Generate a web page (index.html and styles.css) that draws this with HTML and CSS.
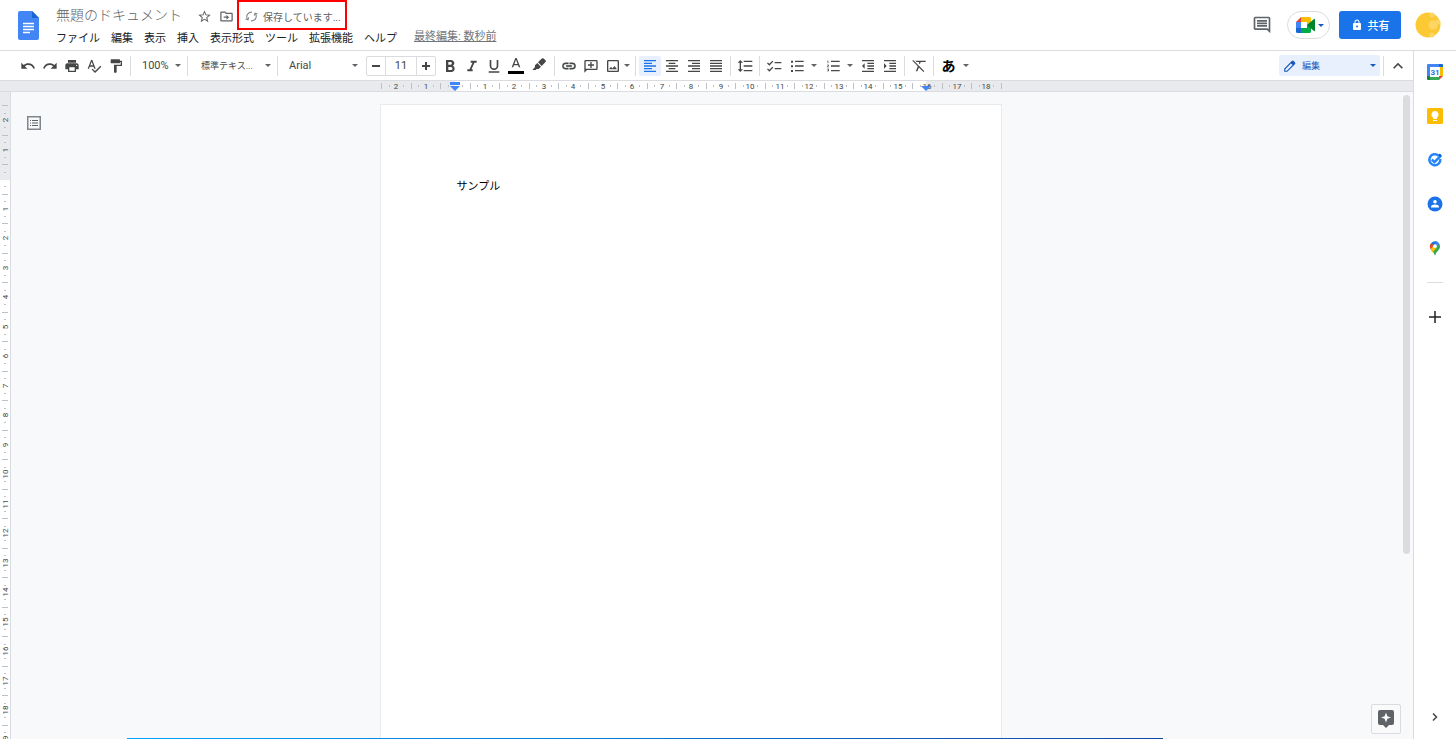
FILE: index.html
```html
<!DOCTYPE html>
<html lang="ja">
<head>
<meta charset="utf-8">
<meta name="viewport" content="width=device-width, initial-scale=1">
<title>無題のドキュメント</title>
<link rel="stylesheet" href="styles.css">
</head>
<body>
<div class="app">
  <header class="header">
    <a class="logo" href="#" aria-label="ドキュメント ホーム">
      <svg viewBox="0 0 22 30" width="22" height="30"><path fill="#4285f4" d="M2 0h12l7 7v20a2 2 0 0 1-2 2H2a2 2 0 0 1-2-2V2a2 2 0 0 1 2-2z"/><path fill="#1967d2" d="M14 0l7 7h-7z"/><path stroke="#fff" stroke-width="1.5" d="M5 12.5h11M5 15.5h11M5 18.500h11M5 21.500h7"/></svg>
    </a>
    <div class="heading">
      <div class="title-row">
        <h1 class="title">無題のドキュメント</h1>
        <button class="mini" aria-label="スター"><svg viewBox="0 0 24 24" width="15" height="15"><path d="M22 9.240l-7.190-.62L12 2 9.190 8.630 2 9.240l5.460 4.730L5.820 21 12 17.270 18.180 21l-1.630-7.030L22 9.240zM12 15.400l-3.760 2.270 1-4.280-3.320-2.880 4.380-.38L12 6.100l1.710 4.040 4.380.38-3.320 2.880 1 4.280L12 15.400z"/></svg></button>
        <button class="mini" aria-label="移動"><svg viewBox="0 0 24 24" width="15" height="15"><path d="M20 6h-8l-2-2H4c-1.100 0-2 .9-2 2v12c0 1.100.9 2 2 2h16c1.100 0 2-.9 2-2V8c0-1.100-.9-2-2-2zm0 12H4V6h5.200l2 2H20v10zm-8-1l4-4-4-4v3H7.500v2H12z"/></svg></button>
        <div class="saving" role="status">
          <svg viewBox="0 0 24 24" width="13" height="13" fill="none" stroke="#80868b" stroke-width="2"><path d="M5 17.500A8.500 8.500 0 0 1 13 4M19 6.500A8.500 8.500 0 0 1 11 20"/><path d="M1 16.500l4.500 1.500L7 13.500M23 7.500L18.500 6 17 10.500"/></svg>
          <span>保存しています...</span>
        </div>
      </div>
      <nav class="menus">
        <button>ファイル</button><button>編集</button><button>表示</button><button>挿入</button><button>表示形式</button><button>ツール</button><button>拡張機能</button><button>ヘルプ</button>
        <a class="last-edit" href="#">最終編集: 数秒前</a>
      </nav>
    </div>
    <div class="actions">
      <button class="comments" aria-label="コメント"><svg viewBox="0 0 24 24" width="20" height="20"><path d="M21.990 4c0-1.100-.89-2-1.990-2H4c-1.100 0-2 .9-2 2v12c0 1.100.9 2 2 2h14l4 4-.01-18zM20 4v13.170L18.830 16H4V4h16zM6 12h12v2H6zm0-3h12v2H6zm0-3h12v2H6z"/></svg></button>
      <button class="meet" aria-label="Meet">
        <svg viewBox="0 0 20 16" width="20" height="16"><path fill="#ea4335" d="M0 5l5-5v5z"/><path fill="#4285f4" d="M0 5h5v6H0z"/><path fill="#1967d2" d="M0 11h5v5H1.500A1.500 1.500 0 0 1 0 14.500z"/><path fill="#fbbc04" d="M5 0h8.500A1.500 1.500 0 0 1 15 1.500V5l-4 3V5H5z"/><path fill="#00ac47" d="M5 11h6V8l4-3v9.500a1.500 1.500 0 0 1-1.500 1.500H5z"/><path fill="#00832d" d="M11 8l7-6q1-.6 1 .6v10.800q0 1.200-1 .6z"/></svg>
        <span class="caret caret-blue"></span>
      </button>
      <button class="share"><svg viewBox="0 0 24 24" width="12" height="12"><path fill="#fff" d="M18 8h-1V6c0-2.760-2.240-5-5-5S7 3.240 7 6v2H6c-1.100 0-2 .9-2 2v10c0 1.100.9 2 2 2h12c1.100 0 2-.9 2-2V10c0-1.100-.9-2-2-2zm-6 9a2 2 0 1 1 0-4 2 2 0 0 1 0 4zm3-9H9V6a3 3 0 0 1 6 0z"/></svg>共有</button>
      <button class="avatar" aria-label="アカウント"><svg viewBox="0 0 26 26" width="26" height="26"><circle cx="13" cy="13" r="12.500" fill="#fcc934"/><g fill="#fdd663"><circle cx="18" cy="13" r="4.500"/><circle cx="23" cy="10" r="2.500"/><circle cx="17" cy="3" r="2.500"/><circle cx="17" cy="23" r="2.500"/></g></svg></button>
    </div>
  </header>

  <main class="editor">
    <div class="toolbar" role="toolbar" aria-label="ツールバー">
      <button class="tool" aria-label="元に戻す"><svg viewBox="0 0 24 24"><path d="M12.500 8c-2.650 0-5.050.99-6.900 2.600L2 7v9h9l-3.620-3.620c1.390-1.160 3.160-1.880 5.120-1.880 3.540 0 6.550 2.310 7.600 5.500l2.370-.78C21.080 11.030 17.150 8 12.500 8z"/></svg></button>
      <button class="tool" aria-label="やり直し"><svg viewBox="0 0 24 24"><path d="M18.400 10.600C16.550 8.990 14.150 8 11.500 8c-4.650 0-8.580 3.030-9.960 7.220L3.900 16c1.050-3.190 4.050-5.500 7.600-5.500 1.950 0 3.730.72 5.120 1.880L13 16h9V7l-3.600 3.600z"/></svg></button>
      <button class="tool" aria-label="印刷"><svg viewBox="0 0 24 24"><path d="M19 8H5c-1.660 0-3 1.340-3 3v6h4v4h12v-4h4v-6c0-1.660-1.340-3-3-3zm-3 11H8v-5h8v5zm3-7c-.55 0-1-.45-1-1s.45-1 1-1 1 .45 1 1-.45 1-1 1zm-1-9H6v4h12V3z"/></svg></button>
      <button class="tool" aria-label="スペルチェック"><svg viewBox="0 0 24 24"><path d="M12.450 16h2.090L9.430 3H7.570L2.460 16h2.090l1.120-3h5.640l1.140 3zm-6.020-5L8.500 5.480 10.570 11H6.430zm15.160.59l-8.090 8.090L9.830 16l-1.410 1.410 5.090 5.090L23 13l-1.410-1.410z"/></svg></button>
      <button class="tool" aria-label="書式を貼り付け"><svg viewBox="0 0 24 24"><path d="M18 4V3c0-.55-.45-1-1-1H5c-.55 0-1 .45-1 1v4c0 .55.45 1 1 1h12c.55 0 1-.45 1-1V6h1v4H9v11c0 .55.45 1 1 1h2c.55 0 1-.45 1-1v-9h8V4h-3z"/></svg></button>
      <span class="sep"></span>
      <label class="pick pick-zoom"><select aria-label="ズーム"><option>100%</option></select></label>
      <span class="sep"></span>
      <label class="pick pick-style"><select aria-label="スタイル"><option>標準テキス...</option></select></label>
      <span class="sep"></span>
      <label class="pick pick-font"><select aria-label="フォント"><option>Arial</option></select></label>
      <div class="size">
        <button aria-label="縮小"><svg viewBox="0 0 8 8" width="8" height="8"><path d="M0 3h8v2H0z"/></svg></button>
        <input type="text" value="11" aria-label="フォントサイズ">
        <button aria-label="拡大"><svg viewBox="0 0 8 8" width="8" height="8"><path d="M0 3h3V0h2v3h3v2H5v3H3V5H0z"/></svg></button>
      </div>
      <button class="tool" aria-label="太字"><svg viewBox="0 0 24 24"><path d="M16.500 11.500c1.200-.8 2-2.200 2-3.500 0-3-2.300-5-5.200-5H6v18h8c3 0 5-2.300 5-5 0-2-1-3.700-2.500-4.500zM9.500 6h3.300a2 2 0 0 1 0 4H9.500zm4 12h-4v-4.500h4a2.200 2.200 0 0 1 0 4.500z"/></svg></button>
      <button class="tool" aria-label="斜体"><svg viewBox="0 0 24 24"><path d="M10 4v3h2.710l-4.420 10H5v3h8v-3h-1.710l4.420-10H19V4z"/></svg></button>
      <button class="tool" aria-label="下線"><svg viewBox="0 0 24 24"><path d="M12 18c3.600 0 6.500-2.900 6.500-6.500V3H16v8.500a4 4 0 0 1-8 0V3H5.500v8.500C5.500 15.100 8.400 18 12 18zm-8 2v2h16v-2z"/></svg></button>
      <button class="tool" aria-label="文字の色"><svg viewBox="0 0 24 24"><path d="M11 0L5.500 14h2.300l1.100-3h6.200l1.100 3h2.300L13 0zm-1.400 9L12 2.700 14.400 9z"/><path fill="#000" d="M0 19.500h24V24H0z"/></svg></button>
      <button class="tool tool-wide" aria-label="ハイライト"><svg viewBox="0 0 24 24"><path d="M15 2l2-1.500q1-.5 2 .3l3 3q.8 1 0 2L20 8l-4 4-5.500-5.500zM9.500 7.500l5.500 5.500-3.500 3.500h-3L7 18H2l4-4.500V11z"/></svg></button>
      <span class="sep"></span>
      <button class="tool" aria-label="リンク"><svg viewBox="0 0 24 24"><path d="M3.900 12c0-1.710 1.390-3.100 3.100-3.100h4V7H7a5 5 0 0 0 0 10h4v-1.900H7c-1.710 0-3.100-1.390-3.100-3.100zM8 13h8v-2H8zm9-6h-4v1.900h4a3.100 3.100 0 0 1 0 6.200h-4V17h4a5 5 0 0 0 0-10z" stroke="#444746" stroke-width=".6"/></svg></button>
      <button class="tool" aria-label="コメントを追加"><svg viewBox="0 0 24 24"><path d="M20 3H4a2 2 0 0 0-2 2v17l4-4h14a2 2 0 0 0 2-2V5a2 2 0 0 0-2-2zm0 13H4V5h16zm-9-1h2v-3.500h3.500v-2H13V6h-2v3.500H7.500v2H11z"/></svg></button>
      <button class="tool tool-image" aria-label="画像"><svg viewBox="0 0 24 24"><path d="M19 5v14H5V5h14m0-2H5c-1.100 0-2 .9-2 2v14c0 1.100.9 2 2 2h14c1.100 0 2-.9 2-2V5c0-1.100-.9-2-2-2zm-4.860 8.860l-3 3.870L9 13.140 6 17h12l-3.860-5.140z"/></svg><span class="caret"></span></button>
      <span class="sep"></span>
      <button class="tool active" aria-label="左揃え" aria-pressed="true"><svg viewBox="0 0 24 24"><path d="M3 3h18v2H3zm0 4h12v2H3zm0 4h18v2H3zm0 4h12v2H3zm0 4h18v2H3z"/></svg></button>
      <button class="tool" aria-label="中央揃え"><svg viewBox="0 0 24 24"><path d="M3 3h18v2H3zm4 4h10v2H7zm-4 4h18v2H3zm4 4h10v2H7zm-4 4h18v2H3z"/></svg></button>
      <button class="tool" aria-label="右揃え"><svg viewBox="0 0 24 24"><path d="M3 3h18v2H3zm6 4h12v2H9zm-6 4h18v2H3zm6 4h12v2H9zm-6 4h18v2H3z"/></svg></button>
      <button class="tool" aria-label="両端揃え"><svg viewBox="0 0 24 24"><path d="M3 3h18v2H3zm0 4h18v2H3zm0 4h18v2H3zm0 4h18v2H3zm0 4h18v2H3z"/></svg></button>
      <span class="sep"></span>
      <button class="tool" aria-label="行間隔"><svg viewBox="0 0 24 24"><path d="M6 7h3L5 3 1 7h3v10H1l4 4 4-4H6zm4-3v2h13V4zm0 7v2h13v-2zm0 7v2h13v-2z"/></svg></button>
      <span class="sep"></span>
      <button class="tool" aria-label="チェックリスト"><svg viewBox="0 0 24 24"><path d="M13 6h10v2H13zm0 9h10v2H13zM5 11.500L1.500 8l1.400-1.400L5 8.700 9.600 4 11 5.400zm0 9L1.500 17l1.400-1.400L5 17.700 9.600 13l1.400 1.400z"/></svg></button>
      <button class="tool tool-list" aria-label="箇条書き"><svg viewBox="0 0 24 24"><path d="M3 4h3v3H3zm0 7h3v3H3zm0 7h3v3H3zM9 4h13v2H9zm0 7h13v2H9zm0 7h13v2H9z"/></svg><span class="caret"></span></button>
      <button class="tool tool-list" aria-label="番号付きリスト"><svg viewBox="0 0 24 24"><path d="M3 17h2v.5H4v1h1v.5H3v1h3v-4H3zm1-9h1V4H3v1h1zm-1 3h1.800L3 13.100v.9h3v-1H4.200L6 10.900V10H3zM9 4h13v2H9zm0 7h13v2H9zm0 7h13v2H9z"/></svg><span class="caret"></span></button>
      <button class="tool" aria-label="インデント減"><svg viewBox="0 0 24 24"><path d="M11 17h10v-2H11zm-8-5l4 4V8zm0 9h18v-2H3zM3 3v2h18V3zm8 6h10V7H11zm0 4h10v-2H11z"/></svg></button>
      <button class="tool" aria-label="インデント増"><svg viewBox="0 0 24 24"><path d="M3 21h18v-2H3zM3 8v8l4-4zm8 9h10v-2H11zM3 3v2h18V3zm8 6h10V7H11zm0 4h10v-2H11z"/></svg></button>
      <span class="sep"></span>
      <button class="tool" aria-label="書式をクリア"><svg viewBox="0 0 24 24"><path d="M22 6V4H6.400l2 2h4.100l-.8 1.800 1.500 1.500L14.600 6zM3.300 3L2 4.300l8.200 8.200L7.200 20h2.400l2.200-5.900 6.900 6.900 1.300-1.300z"/></svg></button>
      <span class="sep"></span>
      <button class="tool tool-ime" aria-label="入力ツール"><span class="kana">あ</span><span class="caret"></span></button>
      <div class="mode-area">
        <label class="mode">
          <svg viewBox="0 0 24 24" width="14" height="14"><path fill="#185abc" d="M20.400 5.600l-2-2a2.400 2.400 0 0 0-3.400 0L2 16.600V22h5.400L20.400 9a2.400 2.400 0 0 0 0-3.400zM6.600 20H4v-2.600L13.700 7.700l2.600 2.600z"/></svg>
          <select aria-label="モード"><option>編集</option></select>
          <span class="caret caret-blue"></span>
        </label>
        <span class="sep"></span>
        <button class="tool" aria-label="メニューを非表示"><svg viewBox="0 0 24 24"><path d="M12 7l-7.500 7.500 1.800 1.800L12 10.600l5.700 5.700 1.800-1.800z"/></svg></button>
      </div>
    </div>

    <div class="hruler"><svg id="hruler" width="622" height="12" aria-hidden="true"></svg></div>

    <div class="workspace">
      <div class="vruler"><svg id="vruler" width="10" height="648" aria-hidden="true"></svg></div>
      <div class="canvas">
        <button class="outline" aria-label="ドキュメントの概要を表示"><svg viewBox="0 0 14 14" width="14" height="14"><path fill="none" stroke="#80868b" stroke-width="1.500" d="M.75.75h12.500v12.500H.75z"/><path stroke="#5f6368" d="M3 4.500h1M5 4.500h6M3 7h1M5 7h6M3 9.500h1M5 9.500h6"/></svg></button>
        <article class="page"><p>サンプル</p></article>
        <div class="scroll-thumb"></div>
        <button class="explore" aria-label="データ探索"><svg viewBox="0 0 16 18" width="16" height="18"><path fill="#5f6368" fill-rule="evenodd" d="M2 0h12a2 2 0 0 1 2 2v11a2 2 0 0 1-2 2h-3l-3 3-3-3H2a2 2 0 0 1-2-2V2a2 2 0 0 1 2-2zm6 2.500L6.600 6.200 3 7.500l3.600 1.300L8 12.500l1.400-3.700L13 7.500 9.400 6.200z"/></svg></button>
      </div>
    </div>
  </main>

  <aside class="side">
    <button aria-label="カレンダー"><svg viewBox="0 0 16 16" width="16" height="16"><path fill="#fff" d="M2 2h12v12H2z"/><path fill="#4285f4" d="M1 0h11v3H3v9H0V1a1 1 0 0 1 1-1z"/><path fill="#1967d2" d="M12 0h3a1 1 0 0 1 1 1v2h-4z"/><path fill="#fbbc04" d="M13 3h3v9h-3z"/><path fill="#188038" d="M0 12h3v4H1a1 1 0 0 1-1-1z"/><path fill="#34a853" d="M3 13h9v3H3z"/><path fill="#ea4335" d="M12 12h4l-4 4z"/><text x="8" y="11" text-anchor="middle" class="cal-day">31</text></svg></button>
    <button aria-label="Keep"><svg viewBox="0 0 16 16" width="16" height="16"><rect width="16" height="16" rx="1.500" fill="#fbbc04"/><path fill="#fff" d="M8 3a3.500 3.500 0 0 0-2 6.400V11h4V9.400A3.500 3.500 0 0 0 8 3zM6 12h4v1H6z"/></svg></button>
    <button aria-label="ToDo リスト"><svg viewBox="0 0 16 16" width="16" height="16" fill="none"><path stroke="#2684fc" stroke-width="2.500" d="M11.500 3.600A5.500 5.500 0 1 0 13.300 7"/><path stroke="#2684fc" stroke-width="2.500" d="M4.800 7.500l2.700 2.600L14 3.500"/><path fill="#0066da" d="M12.800 1.500l2 2-1.800 1.800-2-2z"/></svg></button>
    <button aria-label="連絡先"><svg viewBox="0 0 16 16" width="16" height="16"><circle cx="8" cy="8" r="7.500" fill="#1a73e8"/><circle cx="8" cy="5.800" r="1.800" fill="#fff"/><path fill="#fff" d="M4 11.500V11c0-1.600 2-2.400 4-2.400s4 .8 4 2.400v.5z"/></svg></button>
    <button aria-label="マップ"><svg viewBox="0 0 16 16" width="16" height="16"><path fill="#34a853" d="M3 6.500a5 5 0 0 1 10 0c0 3.500-3.500 4.500-4.500 8.200q-.5 1-1 0C6.500 11 3 10 3 6.500z"/><path fill="#4285f4" d="M8 6.500V1.300a5 5 0 0 1 4.500 3z"/><path fill="#1a73e8" d="M4.200 3.300A5 5 0 0 1 9.600 1.800L7 5.500z"/><path fill="#ea4335" d="M4.200 3.300L7 5.600 3.500 9A5 5 0 0 1 4.200 3.300z"/><path fill="#fbbc04" d="M3.500 9L6.500 5.800 9.500 8l-4 4.500z"/><circle cx="8" cy="6.200" r="1.900" fill="#fff"/></svg></button>
    <hr>
    <button aria-label="アドオンを取得"><svg viewBox="0 0 12 12" width="12" height="12"><path fill="none" stroke="#202124" stroke-width="1.500" d="M6 0v12M0 6h12"/></svg></button>
    <button class="collapse" aria-label="サイドパネルを非表示"><svg viewBox="0 0 12 12" width="12" height="12"><path fill="none" stroke="#444746" stroke-width="1.500" d="M4 2.500L7.500 6 4 9.500"/></svg></button>
  </aside>
  <div class="bottom-line"></div>
</div>
<script src="rulers.js"></script>
</body>
</html>
```
FILE: styles.css
```css
* { box-sizing: border-box; }
body {
  margin: 0;
  font-family: Roboto, "Noto Sans CJK JP", sans-serif;
  font-size: 11px;
  color: #202124;
}
button, select, input {
  font: inherit;
  color: inherit;
  border: 0;
  padding: 0;
  margin: 0;
  background: none;
}
button { cursor: pointer; }
svg { display: block; flex: none; }

.app {
  position: relative;
  display: grid;
  grid-template: auto minmax(0, 1fr) / minmax(0, 1fr) 43px;
  height: 100vh;
  overflow: hidden;
}

/* Header */
.header {
  grid-column: 1 / -1;
  display: flex;
  height: 51px;
  border-bottom: 1px solid #dadce0;
  padding-right: 15px;
}
.logo { padding: 11px 12px 0 18px; }
.heading { padding-left: 4px; }
.title-row { display: flex; height: 30px; }
.title {
  margin: 0 11px 0 0;
  padding-top: 4px;
  font-size: 14px;
  line-height: 22px;
  font-weight: 300;
  color: #5f6368;
}
.mini { width: 22px; display: grid; place-items: center; padding-top: 2px; fill: #5f6368; }
.saving {
  display: flex;
  align-items: center;
  gap: 5px;
  width: 110px;
  padding: 2px 0 0 6px;
  border: 2px solid #f00;
  color: #5f6368;
  font-size: 10px;
  white-space: nowrap;
}
.menus { display: flex; gap: 11px; height: 18px; align-items: center; }
.menus button { white-space: nowrap; line-height: 18px; }
.menus .last-edit { margin: -4px 0 0 6px; line-height: 16px; color: #70757a; }
.actions { display: flex; align-items: center; margin-left: auto; }
.comments { margin-right: 15px; fill: #5f6368; }
.meet {
  display: flex;
  align-items: center;
  gap: 2px;
  width: 43px;
  height: 28px;
  padding-left: 8px;
  border: 1px solid #dadce0;
  border-radius: 14px;
}
.share {
  display: flex;
  align-items: center;
  justify-content: center;
  gap: 5px;
  width: 62px;
  height: 28px;
  margin: 0 14px 0 9px;
  border-radius: 3px;
  background: #1a73e8;
  color: #fff;
  font-weight: 500;
}
.caret {
  flex: none;
  border: 3px solid transparent;
  border-top-color: #5f6368;
  border-bottom: 0;
}
.caret-blue { border-top-color: #185abc; }

/* Toolbar */
.editor { display: flex; flex-direction: column; min-width: 0; min-height: 0; }
.toolbar { display: flex; align-items: center; height: 29px; padding: 0 4px 0 17px; flex: none; }
.tool {
  flex: none;
  display: flex;
  align-items: center;
  justify-content: center;
  width: 22px;
  height: 20px;
  border-radius: 2px;
  fill: #444746;
}
.tool svg { width: 16px; height: 16px; }
.tool.active { background: #e8f0fe; fill: #1a73e8; }
.tool-wide { width: 24px; }
.tool-image { width: 30px; gap: 3px; }
.tool-list { width: 36px; gap: 6px; }
.tool-ime { width: 36px; gap: 7px; }
.kana { font-size: 14px; line-height: 20px; font-weight: 700; color: #000; }
.sep { flex: none; width: 1px; height: 20px; margin: 0 3px; background: #dadce0; }
.pick { display: grid; align-items: center; height: 20px; color: #444746; }
.pick select { grid-area: 1 / 1; width: 100%; padding-left: 8px; appearance: none; }
.pick::after {
  content: "";
  grid-area: 1 / 1;
  justify-self: end;
  margin-right: 3px;
  border: 3px solid transparent;
  border-top-color: #5f6368;
  border-bottom: 0;
  pointer-events: none;
}
.pick-zoom { width: 50px; }
.pick-style { width: 83px; }
.pick-style select { padding-left: 10px; font-size: 9px; }
.pick-font { width: 80px; }
.size {
  display: grid;
  grid-template-columns: 18px 32px 18px;
  height: 20px;
  margin: 0 3px 0 5px;
  border: 1px solid #dadce0;
  border-radius: 2px;
  fill: #444746;
}
.size button { display: grid; place-items: center; }
.size input {
  width: 100%;
  border: solid #dadce0;
  border-width: 0 1px;
  text-align: center;
  color: #444746;
}
.mode-area { display: flex; align-items: center; margin-left: auto; }
.mode {
  display: flex;
  align-items: center;
  width: 101px;
  height: 21px;
  padding: 0 4px;
  border-radius: 2px;
  background: #e8f0fe;
  color: #185abc;
  font-size: 9px;
}
.mode select { flex: 1; padding-left: 5px; appearance: none; }

/* Rulers and document */
.hruler {
  flex: none;
  display: flex;
  justify-content: center;
  height: 12px;
  padding-right: 32px;
  border: solid #dadce0;
  border-width: 1px 0;
  background: #e8eaed;
}
.hruler svg { margin-top: -1px; }
.num { font: 8px Roboto, sans-serif; fill: #444746; text-anchor: middle; }
.workspace { flex: 1; display: flex; min-height: 0; }
.vruler { width: 11px; border-right: 1px solid #dadce0; overflow: hidden; }
.canvas {
  position: relative;
  flex: 1;
  padding: 12px 43px 0 0;
  overflow: hidden;
  background: #f8f9fa;
}
.page {
  width: 622px;
  height: 877px;
  margin: 0 auto;
  padding: 74px 76px;
  border: 1px solid #e8eaed;
  background: #fff;
}
.page p { margin: 0; line-height: 16px; color: #000; }
.outline { position: absolute; left: 16px; top: 24px; }
.scroll-thumb {
  position: absolute;
  right: 3px;
  top: 3px;
  width: 7px;
  height: 71%;
  border-radius: 4px;
  background: #dadce0;
}
.explore {
  position: absolute;
  right: 12px;
  bottom: 5px;
  display: grid;
  place-items: center;
  width: 30px;
  height: 30px;
  border: 1px solid #dadce0;
  border-radius: 2px;
  background: #fafafa;
}

/* Side panel */
.side {
  display: flex;
  flex-direction: column;
  align-items: center;
  padding: 13px 0 14px;
  border-left: 1px solid #dadce0;
}
.side button { display: grid; place-items: center; width: 24px; height: 16px; margin-bottom: 28px; }
.side hr { width: 16px; margin: -2px 0 26px; border: 0; border-top: 1px solid #dadce0; }
.side .collapse { margin: auto 0 0; }
.cal-day { font: 700 8px Roboto, sans-serif; fill: #1a73e8; }

.bottom-line {
  position: absolute;
  left: 127px;
  right: 293px;
  bottom: 0;
  height: 1px;
  background: linear-gradient(90deg, #00a4ff, #1347a5);
}
```
FILE: rulers.js
```js
// Draws both centimetre rulers. One centimetre is 29.5 px on screen.
const CM = 29.5;
const NS = 'http://www.w3.org/2000/svg';

function add(parent, name, attrs, text) {
  const el = document.createElementNS(NS, name);
  for (const key in attrs) el.setAttribute(key, attrs[key]);
  if (text !== undefined) el.textContent = text;
  parent.appendChild(el);
}

function drawTicks(svg, zero, from, to, vertical) {
  for (let q = from; q <= to; q++) {
    const p = Math.round(zero + q * CM / 4);
    const cm = Math.abs(q / 4);
    if (q % 4 === 0) {
      if (q === 0) continue;
      add(svg, 'text', vertical
        ? { class: 'num', transform: `translate(8 ${p}) rotate(-90)` }
        : { class: 'num', x: p, y: 9 }, cm);
      continue;
    }
    const len = q % 2 === 0 ? 6 : 2;
    const start = 6 - len / 2 - (vertical ? 1 : 0);
    add(svg, 'rect', vertical
      ? { x: start, y: p, width: len, height: 1, fill: '#bdc1c6' }
      : { x: p, y: start, width: 1, height: len, fill: '#bdc1c6' });
  }
}

const h = document.getElementById('hruler');
add(h, 'rect', { x: 75, y: 1, width: 471, height: 10, fill: '#fff' });
drawTicks(h, 75, -10, 74, false);
add(h, 'path', { d: 'M70 2h10v3H70zM70 6h10l-5 5z', fill: '#4285f4' });
add(h, 'path', { d: 'M541 6h10l-5 5z', fill: '#4285f4' });

const v = document.getElementById('vruler');
add(v, 'rect', { x: 0, y: 0, width: 10, height: 88, fill: '#e8eaed' });
drawTicks(v, 87, -10, 76, true);
```
